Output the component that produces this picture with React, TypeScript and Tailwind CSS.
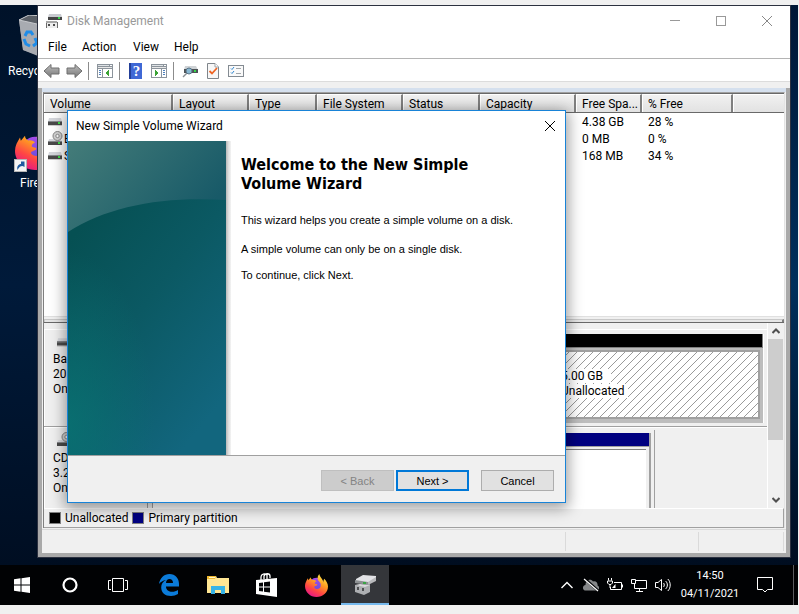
import React from "react";

type IconProps = { className?: string };

function DriveIcon({ className = "" }: IconProps) {
  return (
    <svg viewBox="0 0 14 8" className={className} aria-hidden="true">
      <path d="M1 0H13L14 4H0Z" fill="#d5d7dc" />
      <rect y="3" width="14" height="4" fill="#4a4a4a" />
      <rect y="3" width="14" height="1" fill="#86898c" />
      <rect x="10" y="4" width="2" height="2" fill="#3fe04a" />
      <rect y="7" width="14" height="1" fill="#cfcfcf" />
    </svg>
  );
}

function DiscDriveIcon({ className = "" }: IconProps) {
  return (
    <svg viewBox="0 0 15 15" className={className} aria-hidden="true">
      <path d="M1 8H13L14 11H0Z" fill="#d5d7dc" />
      <circle cx="9.500" cy="5" r="4.500" fill="#d2d2d2" stroke="#858585" />
      <circle cx="9.500" cy="5" r="1.700" fill="#fff" stroke="#8b8b8b" />
      <rect y="10" width="14" height="4" fill="#4a4a4a" />
      <rect y="10" width="14" height="1" fill="#86898c" />
      <rect x="10" y="11" width="2" height="2" fill="#3fe04a" />
    </svg>
  );
}

function AppIcon() {
  return (
    <svg viewBox="0 0 16 16" className="size-4" aria-hidden="true">
      <path d="M3 1H15L16 4H2Z" fill="#c9cbd0" />
      <rect x="2" y="4" width="14" height="3" fill="#454545" />
      <rect x="12" y="4" width="2" height="2" fill="#35d94a" />
      <path d="M0 9H12V15H0Z" fill="#6b6b6b" />
      <path d="M0 8H11V10H0Z" fill="#a7a7a7" />
      <path d="M1 10H11V15H1Z" fill="#ededed" />
      <path d="M2 11H4V13H2ZM7 11H9V13H7Z" fill="#4d4d4d" />
    </svg>
  );
}

function ArrowIcon({ flip = false }: { flip?: boolean }) {
  return (
    <svg viewBox="0 0 17 16" className={flip ? "h-4 w-[17px] -scale-x-100" : "h-4 w-[17px]"} aria-hidden="true">
      <defs>
        <linearGradient id="arrowFill" x1="0" y1="0" x2="0" y2="1">
          <stop offset="0" stopColor="#bdbdbd" />
          <stop offset="1" stopColor="#777" />
        </linearGradient>
      </defs>
      <path d="M1 8L8 1.500V5H16V11H8V14.500Z" fill="url(#arrowFill)" stroke="#6e6e6e" strokeLinejoin="round" />
    </svg>
  );
}

function PaneIcon({ right = false }: { right?: boolean }) {
  return (
    <svg viewBox="0 0 16 14" className="h-[14px] w-4" shapeRendering="crispEdges" aria-hidden="true">
      <rect x="0" y="0" width="16" height="14" fill="#8c949c" />
      <rect x="1" y="1" width="11" height="1" fill="#dfe3e6" />
      <rect x="13" y="1" width="2" height="1" fill="#fff" />
      <rect x="1" y="3" width="14" height="1" fill="#e7e7e7" />
      <rect x="1" y="5" width="14" height="8" fill="#fff" />
      <path d={right ? "M10 5h1v8h-1z" : "M5 5h1v8H5z"} fill="#8c949c" />
      <path d={right ? "M12 6h2v1h-2zM12 8h2v1h-2zM12 10h2v1h-2z" : "M2 6h2v1H2zM2 8h2v1H2zM2 10h2v1H2z"} fill="#4d80bd" />
      <path d={right ? "M4 6L8 9L4 12Z" : "M12 6L8 9L12 12Z"} fill="#3aa335" />
    </svg>
  );
}

function HelpIcon() {
  return (
    <span className="flex h-4 w-[13px] items-center justify-center border-l-2 border-[#233f98] bg-[#3f68d5] font-['Liberation_Serif',serif] text-[15px] leading-4 font-bold text-white">
      ?
    </span>
  );
}

function RescanIcon() {
  return (
    <svg viewBox="0 0 16 14" className="h-[14px] w-4" aria-hidden="true">
      <path d="M3 2H14L16 6H2Z" fill="#cfd3d6" />
      <rect x="2" y="5" width="14" height="4" fill="#4d5256" />
      <rect x="12" y="6" width="2" height="2" fill="#35d94a" />
      <path d="M1 13L5 9" stroke="#8a8f94" strokeWidth="1.500" />
      <circle cx="7" cy="7" r="3" fill="#87b7d2" stroke="#5b7486" />
    </svg>
  );
}

function PropertiesIcon() {
  return (
    <svg viewBox="0 0 12 16" className="h-4 w-3" aria-hidden="true">
      <path d="M.5.500H8L11.500 4V15.500H.5Z" fill="#f7f7f7" stroke="#7f858b" />
      <path d="M8 .500V4H11.500" fill="#fff" stroke="#9da2a6" />
      <path d="M2.500 8L5 10.500L10 5" fill="none" stroke="#ee6423" strokeWidth="1.800" />
    </svg>
  );
}

function ChecklistIcon() {
  return (
    <svg viewBox="0 0 16 12" className="h-3 w-4" aria-hidden="true">
      <rect x=".5" y=".5" width="15" height="11" fill="#fafafa" stroke="#848b92" />
      <path d="M3 3.500L4 4.500L6 2M3 7.500L4 8.500L6 6" fill="none" stroke="#2f86d0" />
      <path d="M8 3.500H13M8 8.500H13" stroke="#a1a6aa" />
    </svg>
  );
}

function FirefoxIcon({ className = "" }: IconProps) {
  return (
    <svg viewBox="0 0 24 24" className={className} aria-hidden="true">
      <defs>
        <linearGradient id="foxFire" x1="0.800" y1="0" x2="0.250" y2="1">
          <stop offset="0" stopColor="#fff04a" />
          <stop offset="0.400" stopColor="#ff9a22" />
          <stop offset="0.700" stopColor="#ff4545" />
          <stop offset="1" stopColor="#e3138d" />
        </linearGradient>
        <linearGradient id="foxGlobe" x1="0.500" y1="0" x2="0.500" y2="1">
          <stop offset="0" stopColor="#a54bea" />
          <stop offset="1" stopColor="#5a4fd8" />
        </linearGradient>
      </defs>
      <circle cx="12" cy="12" r="8" fill="url(#foxGlobe)" />
      <path
        d="M15 0C15 3 19 5 19 9C19 7.500 19.500 6.500 20 5C22 7 24 10 24 13C24 19.500 18.500 24 12 24C5.500 24 0 19 0 12.500C0 9.500 1.500 7 3 4.500L3.500 6.500L6 3.500C6 5 7 6 8 6.300C9.500 6 11 6.500 12 7.500C10.500 8.300 9.500 9.200 10.500 10.200C12 10.500 13.500 10.800 12.500 11.800C11 12.500 10 12.800 9.500 13.500C9.800 15 12 16 14 15.500C16.500 14.800 17 12 16 9.500C15 7.500 13.500 7 13.500 6C12.500 4 13.500 1.500 15 0Z"
        fill="url(#foxFire)"
      />
    </svg>
  );
}

function RecycleBinIcon() {
  return (
    <svg viewBox="0 0 38 44" className="h-11 w-[38px]" aria-hidden="true">
      <path d="M0 5L10 0L38 2L33 43L19 40L4 35Z" fill="#8d9197" />
      <path d="M0 5L18 9L19 41L4 35Z" fill="#a8abb1" />
      <path d="M0 5L10 0L38 2L18 9Z" fill="#5b6067" stroke="#c7c9cd" strokeWidth="1" />
      <path d="M6 21L8 17L12 17L14 20" fill="none" stroke="#1f8ce8" strokeWidth="3" />
      <path d="M5 24L7 29L11 31M14 31L18 28L16 23" fill="none" stroke="#1f8ce8" strokeWidth="3" />
    </svg>
  );
}

function TealBanner() {
  return (
    <svg viewBox="0 0 158 314" preserveAspectRatio="none" className="h-full w-[158px] shrink-0" aria-hidden="true">
      <defs>
        <linearGradient id="bannerTop" x1="0" y1="0" x2="1" y2="0.500">
          <stop offset="0" stopColor="#447c79" />
          <stop offset="1" stopColor="#185a68" />
        </linearGradient>
        <linearGradient id="bannerBase" x1="0.200" y1="0.200" x2="0.700" y2="1">
          <stop offset="0" stopColor="#065053" />
          <stop offset="0.450" stopColor="#0b5963" />
          <stop offset="1" stopColor="#12667e" />
        </linearGradient>
        <radialGradient id="bannerGlow" cx="0" cy="0.900" r="0.550">
          <stop offset="0" stopColor="#087674" stopOpacity="0.700" />
          <stop offset="1" stopColor="#087674" stopOpacity="0" />
        </radialGradient>
      </defs>
      <rect width="158" height="314" fill="url(#bannerBase)" />
      <rect width="158" height="314" fill="url(#bannerGlow)" />
      <path d="M0 0H158V59C95 55 40 65 0 91Z" fill="url(#bannerTop)" />
    </svg>
  );
}

const columns = [
  { name: "Volume", width: "w-[129px]" },
  { name: "Layout", width: "w-[76px]" },
  { name: "Type", width: "w-[68px]" },
  { name: "File System", width: "w-[86px]" },
  { name: "Status", width: "w-[77px]" },
  { name: "Capacity", width: "w-[96px]" },
  { name: "Free Spa...", width: "w-[66px]" },
  { name: "% Free", width: "w-[91px]" },
  { name: "", width: "" },
];

const volumes = [
  { name: "", free: "4.38 GB", percent: "28 %", disc: false },
  { name: "E", free: "0 MB", percent: "0 %", disc: true },
  { name: "S", free: "168 MB", percent: "34 %", disc: false },
];

function VolumeList() {
  return (
    <div className="min-h-0 flex-1 overflow-hidden border-t border-[#696969] bg-white">
      <table className="w-full table-fixed border-separate border-spacing-0">
        <thead>
          <tr>
            {columns.map((c, i) => (
              <th key={i} className={`${c.width} h-[19px] border-b border-[#696969] p-0 text-left font-normal`}>
                <div
                  className={`h-[18px] truncate border-t border-l border-t-white border-l-white bg-linear-to-b from-[#f1f1f1] to-[#e2e2e2] pl-[5px] leading-[18px] ${
                    i < 8 ? "border-r-2 border-r-[#808080]" : ""
                  }`}
                >
                  {c.name}
                </div>
              </th>
            ))}
          </tr>
        </thead>
        <tbody>
          {volumes.map((v) => (
            <tr key={v.free}>
              <td className="h-[17px] p-0">
                <div className="flex h-[17px] items-center gap-px pl-1">
                  {v.disc ? <DiscDriveIcon className="size-[15px]" /> : <DriveIcon className="mr-px h-2 w-[14px]" />}
                  {v.name}
                </div>
              </td>
              <td colSpan={5} className="p-0" />
              <td className="p-0 pt-px pl-[6px] leading-4">{v.free}</td>
              <td className="p-0 pt-px pl-[6px] leading-4">{v.percent}</td>
              <td className="p-0" />
            </tr>
          ))}
        </tbody>
      </table>
    </div>
  );
}

function Hatching() {
  return (
    <svg className="absolute inset-0 size-full" shapeRendering="crispEdges" aria-hidden="true">
      <defs>
        <pattern id="hatch" width="8" height="8" patternUnits="userSpaceOnUse">
          <path d="M-1 9L9 -1M-1 1L1 -1M7 9L9 7" stroke="#9a9a9a" />
        </pattern>
      </defs>
      <rect width="100%" height="100%" fill="url(#hatch)" />
    </svg>
  );
}

function Chevron({ className = "" }: IconProps) {
  return (
    <svg viewBox="0 0 8 6" className={className} aria-hidden="true">
      <path d="M.5 5L4 1.500L7.500 5" fill="none" stroke="#505050" strokeWidth="2" />
    </svg>
  );
}

function GraphPanel() {
  return (
    <div className="flex h-[185px] shrink-0 overflow-hidden">
      <div className="mt-[6px] min-w-0 flex-1 border-t border-white">
        <section className="flex h-[97px] border-b border-[#a0a0a0]">
          <div className="w-[104px] shrink-0 border-l border-white pt-2 pl-2">
            <DriveIcon className="ml-1 h-[9px] w-[15px]" />
            <p className="mt-[5px] leading-[15px]">Basic<br />20.00 GB<br />Online</p>
          </div>
          <div className="mt-1 mr-[3px] mb-[3px] flex min-w-0 flex-1 flex-col border-r border-white bg-[#bdbdbd]">
            <div className="h-[14px] border-r border-b border-[#808080] bg-black" />
            <div className="flex flex-1 pt-[2px] pr-[3px] pb-[4px]">
              <div className="w-[407px] shrink-0 border border-[#909090] bg-white" />
              <div className="relative ml-1 flex-1 border-2 border-[#a0a0a0] bg-white">
                <Hatching />
                <p className="absolute top-[17px] left-0 leading-[15px]">
                  <span className="bg-white pr-2">5.00 GB</span>
                  <br />
                  <span className="bg-white pr-1">Unallocated</span>
                </p>
              </div>
            </div>
          </div>
        </section>
        <section className="flex h-[97px] border-t border-white">
          <div className="w-[104px] shrink-0 border-r border-l border-r-[#a0a0a0] border-l-white pt-1 pl-2">
            <DiscDriveIcon className="ml-1 size-[15px]" />
            <p className="mt-1 leading-[15px]">CD-ROM<br />3.23 GB<br />Online</p>
          </div>
          <div className="mt-[2px] mr-[112px] flex-1 border-r border-[#a0a0a0] pt-[3px] pr-[3px] pl-1">
            <div className="flex h-full flex-col border-r-2 border-l border-[#a0a0a0]">
              <div className="h-[14px] shrink-0 border-b border-[#a0a0a0] bg-[#000080]" />
              <div className="mt-[2px] mr-[3px] flex-1 border-t border-[#808080] bg-white" />
            </div>
          </div>
        </section>
      </div>
      <div className="mr-px flex w-4 shrink-0 flex-col items-center border-l border-white">
        <Chevron className="my-[5px] h-[6px] w-2" />
        <div className="mb-auto h-[101px] w-full bg-[#cdcdcd]" />
        <Chevron className="my-[5px] h-[6px] w-2 rotate-180" />
      </div>
    </div>
  );
}

function DiskManagement() {
  return (
    <main className="absolute top-0 right-[7px] bottom-[7px] left-[37px] flex flex-col border border-[#2c3140] bg-[#f0f0f0] text-black">
      <header className="flex h-[30px] shrink-0 items-center bg-white pl-2 text-[#999]">
        <AppIcon />
        <h1 className="ml-[5px] flex-1">Disk Management</h1>
        <button aria-label="Minimize" className="flex w-[46px] justify-center">
          <svg viewBox="0 0 10 10" className="size-[10px]"><path d="M0 4.500H10" stroke="#999" /></svg>
        </button>
        <button aria-label="Maximize" className="flex w-[46px] justify-center">
          <svg viewBox="0 0 10 10" className="size-[10px]"><rect x=".5" y=".5" width="9" height="9" fill="none" stroke="#999" /></svg>
        </button>
        <button aria-label="Close" className="flex w-[46px] justify-center">
          <svg viewBox="0 0 10 10" className="size-[10px]"><path d="M0 0L10 10M10 0L0 10" stroke="#888" /></svg>
        </button>
      </header>
      <nav className="flex h-[23px] shrink-0 items-center border-b border-[#b4b4b4] bg-white pl-[10px]">
        <button className="w-[34px] text-left">File</button>
        <button className="w-[51px] text-left">Action</button>
        <button className="w-[41px] text-left">View</button>
        <button className="text-left">Help</button>
      </nav>
      <div className="flex h-[23px] shrink-0 items-center border-b border-[#dcdcdc] bg-white pt-[2px] pl-[5px]">
        <button aria-label="Back" className="w-[23px]"><ArrowIcon /></button>
        <button aria-label="Forward" className="w-[22px]"><ArrowIcon flip /></button>
        <span className="mr-2 h-[18px] w-px bg-[#8c8c8c]" />
        <button aria-label="Show tree" className="w-[22px]"><PaneIcon /></button>
        <span className="mr-[9px] h-[18px] w-px bg-[#8c8c8c]" />
        <button aria-label="Help topics" className="w-[22px]"><HelpIcon /></button>
        <button aria-label="Show actions" className="w-[22px]"><PaneIcon right /></button>
        <span className="mr-2 h-[18px] w-px bg-[#8c8c8c]" />
        <button aria-label="Rescan disks" className="w-[25px]"><RescanIcon /></button>
        <button aria-label="Properties" className="w-[21px]"><PropertiesIcon /></button>
        <button aria-label="List" className="w-[22px]"><ChecklistIcon /></button>
      </div>
      <div className="h-[6px] shrink-0" />
      <div className="flex min-h-0 flex-1 flex-col border-r-4 border-b-4 border-l-4 border-[#a9a9a9] bg-[#f0f0f0]">
        <div className="h-1 shrink-0 bg-[#d5e0ee]" />
        <div className="mr-px ml-px flex min-h-0 flex-1 flex-col border-t border-r border-l border-t-[#a0a0a0] border-r-[#e3e3e3] border-l-[#808080]">
          <VolumeList />
          <div className="h-[7px] shrink-0 border-t border-b border-t-[#e0e0e0] border-b-[#696969] pt-[2px]">
            <div className="h-[3px] border-t border-r-2 border-l border-t-[#c8c8c8] border-r-[#808080] border-l-[#c8c8c8] bg-[#e6e6e6]" />
          </div>
          <GraphPanel />
          <div className="flex h-5 shrink-0 items-center border-t border-r border-b border-t-white border-r-[#a0a0a0] border-b-[#a0a0a0] pl-[5px]">
            <span className="size-[12px] border border-[#808080] bg-black" />
            <span className="ml-1">Unallocated</span>
            <span className="ml-1 size-[12px] border border-[#808080] bg-[#000080]" />
            <span className="ml-1">Primary partition</span>
          </div>
        </div>
        <div className="mt-px flex h-6 shrink-0 justify-end border-t border-[#dadada] py-[2px]">
          <span className="w-[133px] border-l border-[#dadada]" />
          <span className="w-[85px] border-l border-[#dadada]" />
          <span className="w-[3px] border-l border-[#dadada]" />
        </div>
      </div>
    </main>
  );
}

function Wizard() {
  return (
    <div
      role="dialog"
      aria-labelledby="wizard-title"
      className="absolute top-[105px] left-[67px] flex w-[499px] flex-col border border-[#1883d7] bg-white text-black shadow-[0_3px_14px_2px_rgba(0,0,0,0.4)]"
    >
      <header className="flex h-[30px] items-center pl-2">
        <h2 id="wizard-title" className="flex-1">New Simple Volume Wizard</h2>
        <button aria-label="Close wizard" className="mr-[10px]">
          <svg viewBox="0 0 10 10" className="size-[10px]"><path d="M0 0L10 10M10 0L0 10" stroke="#000" /></svg>
        </button>
      </header>
      <div className="flex h-[314px]">
        <TealBanner />
        <div className="w-[5px] shrink-0 bg-linear-to-r from-[#b8b8b8] via-[#dedede] to-[#f4f4f4]" />
        <div className="flex-1 pt-[14px] pl-[10px] font-['Liberation_Sans',sans-serif] text-[11px]">
          <h3 className="w-[240px] font-['DejaVu_Sans_Condensed','DejaVu_Sans',sans-serif] text-[16px] leading-[19px] font-bold">
            Welcome to the New Simple Volume Wizard
          </h3>
          <p className="mt-5 leading-[14px]">This wizard helps you create a simple volume on a disk.</p>
          <p className="mt-[15px] leading-[14px]">A simple volume can only be on a single disk.</p>
          <p className="mt-3 leading-[14px]">To continue, click Next.</p>
        </div>
      </div>
      <footer className="flex h-[47px] border-t border-[#a0a0a0] bg-[#f0f0f0] pt-[14px] pr-[11px] font-['Liberation_Sans',sans-serif] text-[11px]">
        <button disabled className="ml-auto h-[21px] w-[73px] border border-[#bfbfbf] bg-[#ccc] text-[#838383]">&lt; Back</button>
        <button className="ml-[2px] h-[21px] w-[73px] border-2 border-[#0078d7] bg-[#e1e1e1]">Next &gt;</button>
        <button className="ml-3 h-[21px] w-[73px] border border-[#adadad] bg-[#e1e1e1]">Cancel</button>
      </footer>
    </div>
  );
}

function Taskbar() {
  return (
    <footer className="mr-px flex h-10 shrink-0 items-stretch bg-[#010204] text-white">
      <button aria-label="Start" className="flex w-[46px] items-center justify-center pr-[2px]">
        <svg viewBox="0 0 16 16" className="size-4"><path d="M0 2.300L6.500 1.300V7.500H0ZM7.500 1.200L16 0V7.500H7.500ZM0 8.500H6.500V14.700L0 13.700ZM7.500 8.500H16V16L7.500 14.800Z" fill="#fff" /></svg>
      </button>
      <button aria-label="Search" className="flex w-12 items-center justify-center">
        <svg viewBox="0 0 16 16" className="size-4"><circle cx="8" cy="8" r="6.500" fill="none" stroke="#fff" strokeWidth="2.200" /></svg>
      </button>
      <button aria-label="Task view" className="mr-[3px] flex w-12 items-center justify-center">
        <svg viewBox="0 0 20 14" className="h-[14px] w-5"><path d="M4.500.500H15.500V13.500H4.500ZM3 2.500H.5V11.500H3M17 2.500H19.500V11.500H17" fill="none" stroke="#fff" /></svg>
      </button>
      <div className="flex gap-px">
        <button aria-label="Edge" className="flex w-12 items-center justify-center">
          <svg viewBox="0 0 20 22" className="h-[22px] w-5">
            <path d="M0 10C1 4 5 0 10.500 0C16.500 0 20 4.500 20 10V12.500H7C7 16 10 17.800 13 17.800C15.300 17.800 17.300 17 19 16V20C17 21.300 14.500 22 12 22C6 22 2.200 18.500 2.200 13.500C2.200 10 4 7.500 7 6C4 6.500 1.500 8 0 10ZM7 9H14C14 6.500 12.500 5 10.500 5C8.500 5 7.200 6.500 7 9Z" fill="#0b7bd9" fillRule="evenodd" />
          </svg>
        </button>
        <button aria-label="File Explorer" className="flex w-12 items-center justify-center">
          <svg viewBox="0 0 22 18" className="h-[18px] w-[22px]">
            <path d="M0 0H9L10 2H22V17H0Z" fill="#ffe694" />
            <path d="M0 0H9L8 3H0Z" fill="#efb92f" />
            <path d="M2 1H8V2H2Z" fill="#fff5cf" />
            <path d="M4 10H18V18H14V14H8V18H4Z" fill="#38b4e7" />
          </svg>
        </button>
        <button aria-label="Store" className="flex w-12 items-center justify-center">
          <svg viewBox="0 0 22 24" className="h-6 w-[22px]">
            <path d="M5 7V4C5 1 9 0 11 2V6M8 6V3C9 0 14 0 14 3V5" fill="none" stroke="#fff" strokeWidth="1.300" />
            <path d="M0 7L21 5V24L0 21Z" fill="#fff" />
            <path d="M3 10L7 9.500V13.500H3ZM8 9.300L14 8.500V13.500H8ZM3 14.500H7V18.500L3 18ZM8 14.500H14V19.500L8 18.700Z" fill="#050608" />
          </svg>
        </button>
        <button aria-label="Firefox" className="flex w-12 items-center justify-center"><FirefoxIcon className="size-[23px]" /></button>
        <button aria-label="Disk Management" className="flex w-12 items-center justify-center border-b-2 border-[#76b9ed] bg-[#34363a] pt-[2px]">
          <svg viewBox="0 0 22 20" className="h-5 w-[22px]">
            <path d="M2 4L9 0L22 1V5L14 9L2 6Z" fill="#e2e3e6" />
            <path d="M1 5L14 7V10L1 8Z" fill="#8d9193" />
            <path d="M14 7L22 2V6L14 10Z" fill="#b8b9bc" />
            <path d="M9 7H12V9H9Z" fill="#39a544" />
            <path d="M1 10L11 11L16 9V17L10 20L1 17Z" fill="#adafb2" />
            <path d="M1 10L6 9L16 10L11 12Z" fill="#d9dadc" />
            <path d="M3 12H5V15H3ZM8 13H10V16H8Z" fill="#4d4f51" />
          </svg>
        </button>
      </div>
      <div className="ml-auto flex items-center">
        <button aria-label="Show hidden icons" className="flex w-6 justify-center">
          <svg viewBox="0 0 12 8" className="h-2 w-3"><path d="M.5 7L6 1.500L11.500 7" fill="none" stroke="#fff" strokeWidth="1.400" /></svg>
        </button>
        <button aria-label="OneDrive" className="flex w-6 justify-center">
          <svg viewBox="0 0 16 14" className="h-[14px] w-4">
            <path d="M3 12.500C-1 12.500 -1 7.500 2.500 7C2.500 2 8 0 10 3.500C13 2.500 15 5 14.500 7.500C17 8.500 16.500 12.500 14 12.500Z" fill="#858789" />
            <path d="M2 1L15.500 13" stroke="#010204" strokeWidth="2.600" />
            <path d="M1 1L15 13" stroke="#fff" strokeWidth="1.200" />
          </svg>
        </button>
        <button aria-label="Battery" className="flex w-6 justify-center">
          <svg viewBox="0 0 16 14" className="h-[14px] w-4">
            <path d="M7 4.500H14.500V11.500H3.500V9" fill="none" stroke="#fff" />
            <path d="M15 6.500H16V9.500H15Z" fill="#fff" />
            <path d="M1.500 0V2.500M4.500 0V2.500M.5 3H5.500V5L4 6.500H2L.5 5ZM3 7V10" fill="none" stroke="#fff" />
            <path d="M5 10L8.500 6V10Z" fill="#fff" />
          </svg>
        </button>
        <button aria-label="Network" className="flex w-6 justify-center">
          <svg viewBox="0 0 16 14" className="h-[14px] w-4">
            <path d="M5 2.500H15.500V10.500H3.500V6M8.500 11V13.500M5 13.500H12M.5 1.500H4.500V5.500H.5Z" fill="none" stroke="#fff" />
          </svg>
        </button>
        <button aria-label="Volume" className="flex w-6 justify-center">
          <svg viewBox="0 0 16 14" className="h-[14px] w-4">
            <path d="M.5 4.500H3L6.500 1.500V12.500L3 9.500H.5ZM8.500 5C9.500 6 9.500 8 8.500 9M10.500 3C13 5 13 9 10.500 11M12.800 1C16 4 16 10 12.800 13" fill="none" stroke="#fff" />
          </svg>
        </button>
        <time className="w-[70px] text-center text-[11px] leading-[18px]">14:50<br />04/11/2021</time>
        <button aria-label="Notifications" className="flex w-10 justify-center">
          <svg viewBox="0 0 16 16" className="size-4"><path d="M.5.500H15.500V12.500H10.500L8 15L5.500 12.500H.5Z" fill="none" stroke="#fff" /></svg>
        </button>
        <span className="ml-2 h-10 w-[5px] border-l border-[#5a5c5f]" />
      </div>
    </footer>
  );
}

export default function App() {
  return (
    <div className="flex h-screen flex-col bg-[#f0f0f0] pt-[5px] pb-[9px] font-[Roboto,'Open_Sans',sans-serif] text-[12px] leading-4">
      <div className="relative mr-px min-h-[500px] flex-1 overflow-hidden bg-linear-to-b from-[#001737] via-[#00305c] to-[#000d20]">
        <div className="h-full w-10 bg-linear-to-b from-[#001229] via-[#001a3a] to-[#000e22]" />
        <div className="absolute top-[10px] left-[19px]"><RecycleBinIcon /></div>
        <span className="absolute top-[58px] left-2 whitespace-nowrap text-white">Recycle Bin</span>
        <div className="absolute top-[125px] left-[15px]"><FirefoxIcon className="size-10" /></div>
        <svg viewBox="0 0 13 13" className="absolute top-[154px] left-[14px] size-[13px]" aria-hidden="true">
          <rect x=".5" y=".5" width="12" height="12" fill="#f4f4f4" stroke="#b5b5b5" />
          <path d="M3.500 11C2.500 7.500 4.500 5 7 5V2.500H10.500V8L8.500 7C6 7 5 8.500 3.500 11Z" fill="#1e5aa0" />
        </svg>
        <span className="absolute top-[170px] left-5 text-white">Firefox</span>
        <DiskManagement />
        <Wizard />
      </div>
      <Taskbar />
    </div>
  );
}
